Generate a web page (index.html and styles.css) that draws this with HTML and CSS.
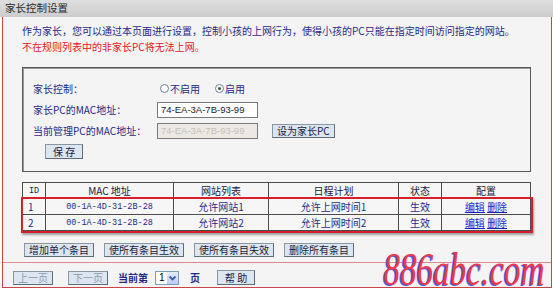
FILE: index.html
```html
<!DOCTYPE html>
<html lang="zh-CN">

<head>
    <meta charset="UTF-8">
    <meta name="viewport" content="width=device-width, initial-scale=1.0">
    <title>家长控制设置</title>
    <link rel="stylesheet" href="styles.css">
</head>

<body>
    <div class="title">家长控制设置</div>

    <div class="panel">
        <p class="intro">作为家长，您可以通过本页面进行设置，控制小孩的上网行为，使得小孩的PC只能在指定时间访问指定的网站。</p>
        <p class="warn">不在规则列表中的非家长PC将无法上网。</p>

        <div class="form-box">
            <div class="row">
                <span class="label">家长控制：</span>
                <span class="radio"><span class="circle"></span>不启用</span>
                <span class="radio"><span class="circle checked"></span>启用</span>
            </div>
            <div class="row">
                <span class="label">家长PC的MAC地址：</span>
                <input class="mac" type="text" value="74-EA-3A-7B-93-99">
            </div>
            <div class="row">
                <span class="label">当前管理PC的MAC地址：</span>
                <input class="mac" type="text" value="74-EA-3A-7B-93-99" disabled>
                <button class="btn set-btn">设为家长PC</button>
            </div>
            <div class="row save-row">
                <button class="btn">保 存</button>
            </div>
        </div>

        <div class="table-wrap">
            <table class="rules">
                <tr>
                    <th class="c-id">ID</th>
                    <th class="c-mac">MAC 地址</th>
                    <th class="c-site">网站列表</th>
                    <th class="c-time">日程计划</th>
                    <th class="c-state">状态</th>
                    <th class="c-cfg">配置</th>
                </tr>
                <tr>
                    <td class="id">1</td>
                    <td class="mono">00-1A-4D-31-2B-28</td>
                    <td>允许网站1</td>
                    <td>允许上网时间1</td>
                    <td>生效</td>
                    <td><a href="#">编辑</a> <a href="#">删除</a></td>
                </tr>
                <tr>
                    <td class="id">2</td>
                    <td class="mono">00-1A-4D-31-2B-28</td>
                    <td>允许网站2</td>
                    <td>允许上网时间2</td>
                    <td>生效</td>
                    <td><a href="#">编辑</a> <a href="#">删除</a></td>
                </tr>
            </table>
            <div class="highlight"></div>
        </div>

        <div class="actions">
            <button class="btn">增加单个条目</button>
            <button class="btn">使所有条目生效</button>
            <button class="btn">使所有条目失效</button>
            <button class="btn">删除所有条目</button>
        </div>

        <div class="pager">
            <button class="btn off prev">上一页</button>
            <button class="btn off">下一页</button>
            <span class="page-text">当前第</span>
            <span class="select">1<span class="arrow"><svg width="9" height="12" viewBox="0 0 9 12"><path d="M1.5 4.5 L4.5 7.5 L7.5 4.5" fill="none" stroke="#3a5fb0" stroke-width="1.8"/></svg></span></span>
            <span class="page-text">页</span>
            <button class="btn help">帮 助</button>
        </div>

        <div class="watermark">886abc.com</div>
    </div>
</body>

</html>
```

FILE: styles.css
```css
body {
    margin: 0;
    font-family: "Noto Sans CJK SC", sans-serif;
    font-size: 10px;
    background-color: #fff;
}

.title {
    height: 17px;
    line-height: 16px;
    padding-left: 5px;
    background: linear-gradient(#dedede, #cdcdcd);
    color: #2a2a2a;
    font-size: 10.5px;
}

.panel {
    position: relative;
    margin: 0 1px 0 2px;
    height: 271px;
    padding: 6px 0 0 0;
    box-sizing: border-box;
    background-color: #f4f4f4;
    border: 1px solid #c8464a;
    border-top: none;
    overflow: hidden;
}

.intro,
.warn {
    margin: 0;
    padding-left: 19px;
    line-height: 16px;
    color: #1e2a86;
}

.warn {
    color: #e8141c;
}

.form-box {
    margin: 12px 20px 0 19px;
    padding: 10px 0 9px 10px;
    border: 1px solid #5a5a5a;
    box-shadow: inset 1px 1px 0 #9a9a9a;
}

.row {
    display: flex;
    align-items: center;
    height: 21px;
    color: #1e2a86;
}

.label {
    width: 124px;
}

.radio {
    display: flex;
    align-items: center;
    margin-left: 3px;
    margin-right: 12px;
}

.circle {
    width: 9px;
    height: 9px;
    margin-right: 1px;
    border: 1px solid #6b7f99;
    border-radius: 50%;
    background-color: #fff;
    box-sizing: border-box;
    position: relative;
}

.circle.checked::after {
    content: "";
    position: absolute;
    left: 2px;
    top: 2px;
    width: 3px;
    height: 3px;
    border-radius: 50%;
    background-color: #2d5a28;
}

.mac {
    width: 101px;
    height: 16px;
    padding: 0 3px;
    box-sizing: border-box;
    border: 1px solid #7a7a7a;
    font-family: "Liberation Sans", Arial, sans-serif;
    font-size: 9.5px;
    color: #222;
    background-color: #fff;
}

.mac:disabled {
    background-color: #ece9e4;
    color: #c4c0ba;
}

.btn {
    height: 14px;
    padding: 0 4px;
    font-family: "Noto Sans CJK SC", sans-serif;
    font-size: 10px;
    line-height: 12px;
    color: #1a1a3a;
    background-color: #dce6f0;
    border: 1px solid #5f6b78;
    border-top-color: #8a96a2;
    border-left-color: #8a96a2;
    cursor: pointer;
}

.set-btn {
    margin-left: 14px;
}

.save-row .btn {
    margin-left: 12px;
    padding: 0 7px;
    height: 15px;
}

.table-wrap {
    position: relative;
    margin: 10px 20px 0 19px;
}

.rules {
    width: 100%;
    border-collapse: collapse;
    table-layout: fixed;
    background-color: #f6f6f6;
}

.rules th,
.rules td {
    height: 15px;
    padding: 0;
    border: 1px solid #4d4d4d;
    text-align: center;
    font-weight: normal;
    color: #1e2a86;
    line-height: 14px;
}

.rules th {
    color: #1a1a3a;
}

.c-id { width: 22px; }
.c-mac { width: 127px; }
.c-site { width: 94px; }
.c-time { width: 129px; }
.c-state { width: 42px; }

.rules .id {
    text-align: left;
    padding-left: 5px;
}

.mono,
.c-id {
    font-family: "Liberation Mono", monospace;
    font-size: 8.5px;
}

.rules a {
    color: #1c1cc8;
    text-decoration: underline;
}

.highlight {
    position: absolute;
    left: -1px;
    right: -2px;
    top: 15px;
    bottom: -2px;
    border: 2px solid #d4202a;
    box-shadow: 1px 2px 2px rgba(0, 0, 0, 0.35);
    pointer-events: none;
}

.actions {
    display: flex;
    gap: 10px;
    margin: 12px 0 0 21px;
}

.pager {
    display: flex;
    align-items: center;
    margin-top: 5px;
    padding: 7px 0 0 10px;
    border-top: 1px solid #d88a8c;
}

.btn.off {
    height: 14px;
    padding: 0 4px;
    color: #8a98b0;
    margin-right: 10px;
}

.btn.prev {
    margin-right: 15px;
}

.page-text {
    color: #1e2a86;
    font-weight: bold;
}

.select {
    display: flex;
    align-items: center;
    justify-content: space-between;
    width: 24px;
    height: 14px;
    margin: 0 11px 0 7px;
    padding-left: 3px;
    box-sizing: border-box;
    border: 1px solid #7f9db9;
    background-color: #fff;
    font-family: "Liberation Sans", Arial, sans-serif;
    font-size: 10px;
}

.arrow {
    display: flex;
    width: 11px;
    height: 12px;
    justify-content: center;
    background: linear-gradient(#e4ecfb, #b9cdf5);
}

.help {
    margin-left: 17px;
    padding: 0 7px;
    height: 15px;
}

.watermark {
    position: absolute;
    right: 6px;
    bottom: 0;
    line-height: 34px;
    font-family: "Liberation Serif", serif;
    font-style: italic;
    font-size: 46px;
    color: #ef3a4c;
    text-shadow: -2px 1px 0 #4a5ff0;
    transform: scaleX(0.72);
    transform-origin: right bottom;
    pointer-events: none;
}
```
